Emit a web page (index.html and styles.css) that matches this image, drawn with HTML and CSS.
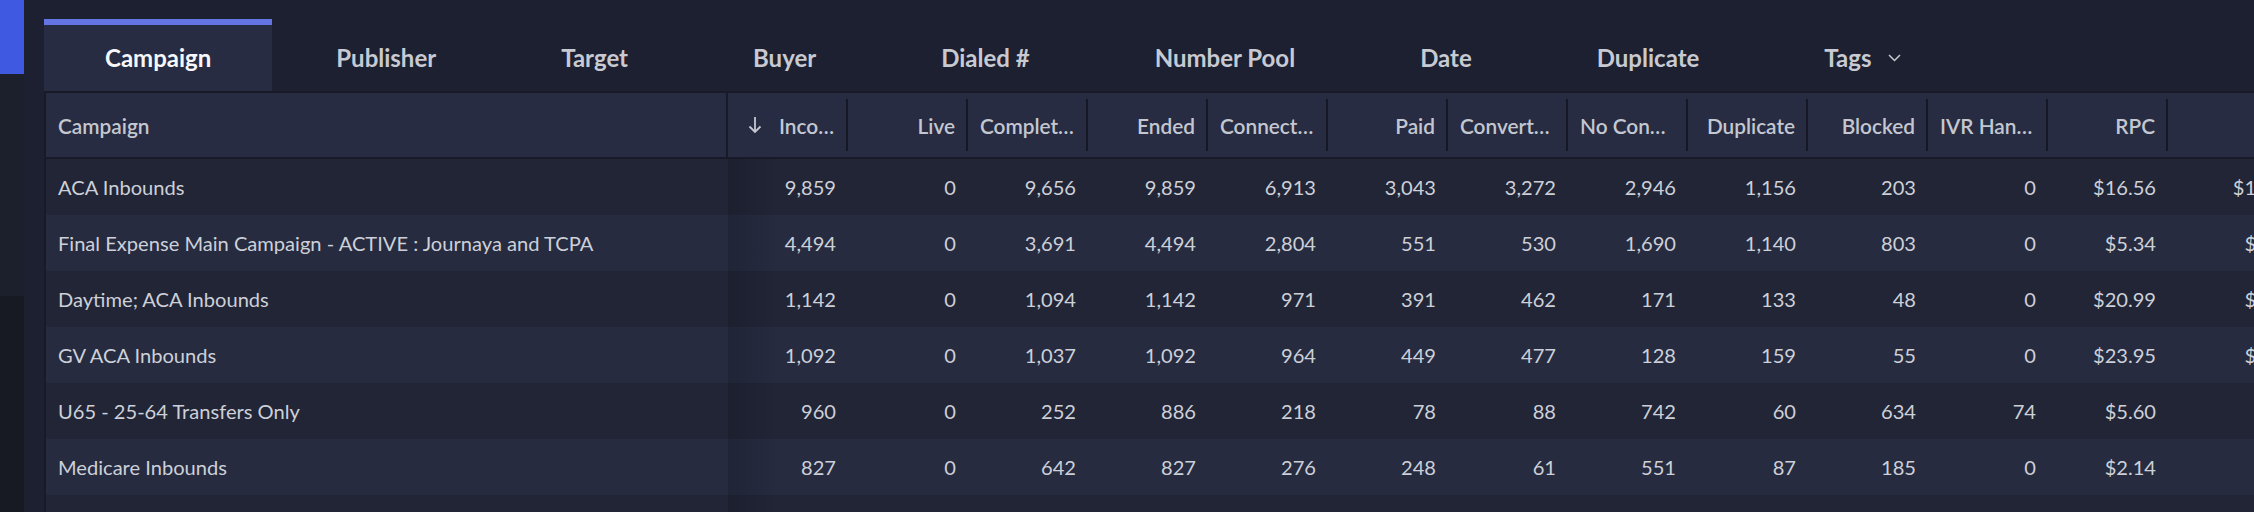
FILE: index.html
```html
<!DOCTYPE html>
<html lang="en">
<head>
<meta charset="utf-8">
<title>Campaign report</title>
<link rel="stylesheet" href="styles.css">
</head>
<body>
<div class="app">
  <aside class="sidebar">
    <div class="sb-top"></div>
    <div class="sb-mid"></div>
    <div class="sb-bot"></div>
  </aside>
  <main class="main">
    <nav class="tabs">
      <div class="tab active">Campaign</div>
      <div class="tab">Publisher</div>
      <div class="tab">Target</div>
      <div class="tab">Buyer</div>
      <div class="tab">Dialed #</div>
      <div class="tab">Number Pool</div>
      <div class="tab">Date</div>
      <div class="tab">Duplicate</div>
      <div class="tab">Tags<svg class="chev" width="13" height="8" viewBox="0 0 13 8"><polyline points="1,1 6.5,6.5 12,1" fill="none" stroke="currentColor" stroke-width="1.5"/></svg></div>
    </nav>
    <section class="table-wrap">
      <div class="row head">
        <div class="hc first">Campaign</div>
        <div class="hc sort"><svg class="arrow" width="14" height="18" viewBox="0 0 14 18"><path d="M7 1V16M1.5 10.5L7 16L12.5 10.5" fill="none" stroke="currentColor" stroke-width="1.8"/></svg><span class="lbl">Incoming</span></div>
        <div class="hc"><span class="lbl">Live</span></div>
        <div class="hc"><span class="lbl">Completed</span></div>
        <div class="hc"><span class="lbl">Ended</span></div>
        <div class="hc"><span class="lbl">Connected</span></div>
        <div class="hc"><span class="lbl">Paid</span></div>
        <div class="hc"><span class="lbl">Converted</span></div>
        <div class="hc"><span class="lbl">No Connect</span></div>
        <div class="hc"><span class="lbl">Duplicate</span></div>
        <div class="hc"><span class="lbl">Blocked</span></div>
        <div class="hc"><span class="lbl">IVR Handled</span></div>
        <div class="hc"><span class="lbl">RPC</span></div>
        <div class="hc"><span class="lbl">Revenue</span></div>
      </div>
      <div class="body">
        <div class="row">
          <div class="c first">ACA Inbounds</div>
          <div class="c n shade">9,859</div><div class="c n">0</div><div class="c n">9,656</div><div class="c n">9,859</div><div class="c n">6,913</div><div class="c n">3,043</div><div class="c n">3,272</div><div class="c n">2,946</div><div class="c n">1,156</div><div class="c n">203</div><div class="c n">0</div><div class="c n">$16.56</div><div class="c n">$163,265.04</div>
        </div>
        <div class="row">
          <div class="c first">Final Expense Main Campaign - ACTIVE : Journaya and TCPA</div>
          <div class="c n shade">4,494</div><div class="c n">0</div><div class="c n">3,691</div><div class="c n">4,494</div><div class="c n">2,804</div><div class="c n">551</div><div class="c n">530</div><div class="c n">1,690</div><div class="c n">1,140</div><div class="c n">803</div><div class="c n">0</div><div class="c n">$5.34</div><div class="c n">$23,997.96</div>
        </div>
        <div class="row">
          <div class="c first">Daytime; ACA Inbounds</div>
          <div class="c n shade">1,142</div><div class="c n">0</div><div class="c n">1,094</div><div class="c n">1,142</div><div class="c n">971</div><div class="c n">391</div><div class="c n">462</div><div class="c n">171</div><div class="c n">133</div><div class="c n">48</div><div class="c n">0</div><div class="c n">$20.99</div><div class="c n">$23,970.58</div>
        </div>
        <div class="row">
          <div class="c first">GV ACA Inbounds</div>
          <div class="c n shade">1,092</div><div class="c n">0</div><div class="c n">1,037</div><div class="c n">1,092</div><div class="c n">964</div><div class="c n">449</div><div class="c n">477</div><div class="c n">128</div><div class="c n">159</div><div class="c n">55</div><div class="c n">0</div><div class="c n">$23.95</div><div class="c n">$26,153.40</div>
        </div>
        <div class="row">
          <div class="c first">U65 - 25-64 Transfers Only</div>
          <div class="c n shade">960</div><div class="c n">0</div><div class="c n">252</div><div class="c n">886</div><div class="c n">218</div><div class="c n">78</div><div class="c n">88</div><div class="c n">742</div><div class="c n">60</div><div class="c n">634</div><div class="c n">74</div><div class="c n">$5.60</div><div class="c n">$5,376.00</div>
        </div>
        <div class="row">
          <div class="c first">Medicare Inbounds</div>
          <div class="c n shade">827</div><div class="c n">0</div><div class="c n">642</div><div class="c n">827</div><div class="c n">276</div><div class="c n">248</div><div class="c n">61</div><div class="c n">551</div><div class="c n">87</div><div class="c n">185</div><div class="c n">0</div><div class="c n">$2.14</div><div class="c n">$1,769.78</div>
        </div>
        <div class="row">
          <div class="c first">Medicare Supplement</div>
          <div class="c n shade">712</div><div class="c n">0</div><div class="c n">598</div><div class="c n">712</div><div class="c n">301</div><div class="c n">214</div><div class="c n">75</div><div class="c n">411</div><div class="c n">66</div><div class="c n">120</div><div class="c n">0</div><div class="c n">$3.02</div><div class="c n">$2,150.24</div>
        </div>
      </div>
    </section>
  </main>
</div>
</body>
</html>
```
FILE: styles.css
```css
html, body {
  margin: 0;
  padding: 0;
}
body {
  width: 2254px;
  height: 512px;
  overflow: hidden;
  background: #1c2031;
  font-family: Lato, "Liberation Sans", sans-serif;
  color: #cdd0d8;
}
.app {
  display: flex;
  height: 512px;
}
.sidebar {
  width: 24px;
  flex: none;
  display: flex;
  flex-direction: column;
}
.sb-top { height: 74px; background: #4059e1; }
.sb-mid { height: 222px; background: #1c1f2c; }
.sb-bot { flex: 1; background: #171a23; }

.main {
  flex: 1;
  min-width: 0;
  padding: 19px 0 0 20px;
  overflow: hidden;
}
.tabs {
  display: flex;
  gap: 3px;
  height: 72px;
}
.tab {
  display: flex;
  align-items: center;
  justify-content: center;
  padding: 0 61px 2px;
  border-top: 6px solid transparent;
  font-size: 24px;
  font-weight: 700;
  color: #c8cad2;
  white-space: nowrap;
}
.tab.active {
  background: #272c42;
  border-top-color: #6474e3;
  color: #f6f7fa;
}
.chev {
  margin-left: 17px;
  margin-top: 2px;
  color: #c8cad2;
}

.table-wrap {
  background: #181b27;
  padding: 2px 0 0 2px;
  width: max-content;
}
.row {
  display: grid;
  grid-template-columns: 682px repeat(12, 120px) 191px;
}
.head {
  height: 64px;
  background: #272c42;
  margin-bottom: 2px;
  align-items: stretch;
}
.hc {
  display: flex;
  align-items: center;
  justify-content: flex-end;
  margin: 6px 0;
  padding: 0 11px 0 12px;
  border-right: 2px solid #161925;
  font-size: 20.8px;
  font-weight: 600;
  color: #c4c7d0;
  min-width: 0;
  white-space: nowrap;
}
.hc.first {
  margin: 0;
  justify-content: flex-start;
  padding-left: 12px;
  border-right-color: #181b27;
}
.hc .lbl {
  overflow: hidden;
  text-overflow: ellipsis;
  min-width: 0;
}
.hc.sort {
  padding-left: 20px;
  padding-right: 9px;
  justify-content: flex-start;
}
.arrow {
  flex: none;
  margin-right: 17px;
}
.body .row {
  height: 56px;
  align-items: center;
}
.body .row:nth-child(odd) { background: #212536; }
.body .row:nth-child(even) { background: #262b40; }
.c {
  font-size: 20.1px;
  white-space: nowrap;
  color: #cdd0d8;
  height: 100%;
  display: flex;
  align-items: center;
}
.c.first {
  padding-left: 12px;
}
.c.n {
  justify-content: flex-end;
  padding-right: 12px;
}
.c.shade {
  background: linear-gradient(to right, rgba(10, 12, 20, 0.22), rgba(10, 12, 20, 0) 52px);
}
```
